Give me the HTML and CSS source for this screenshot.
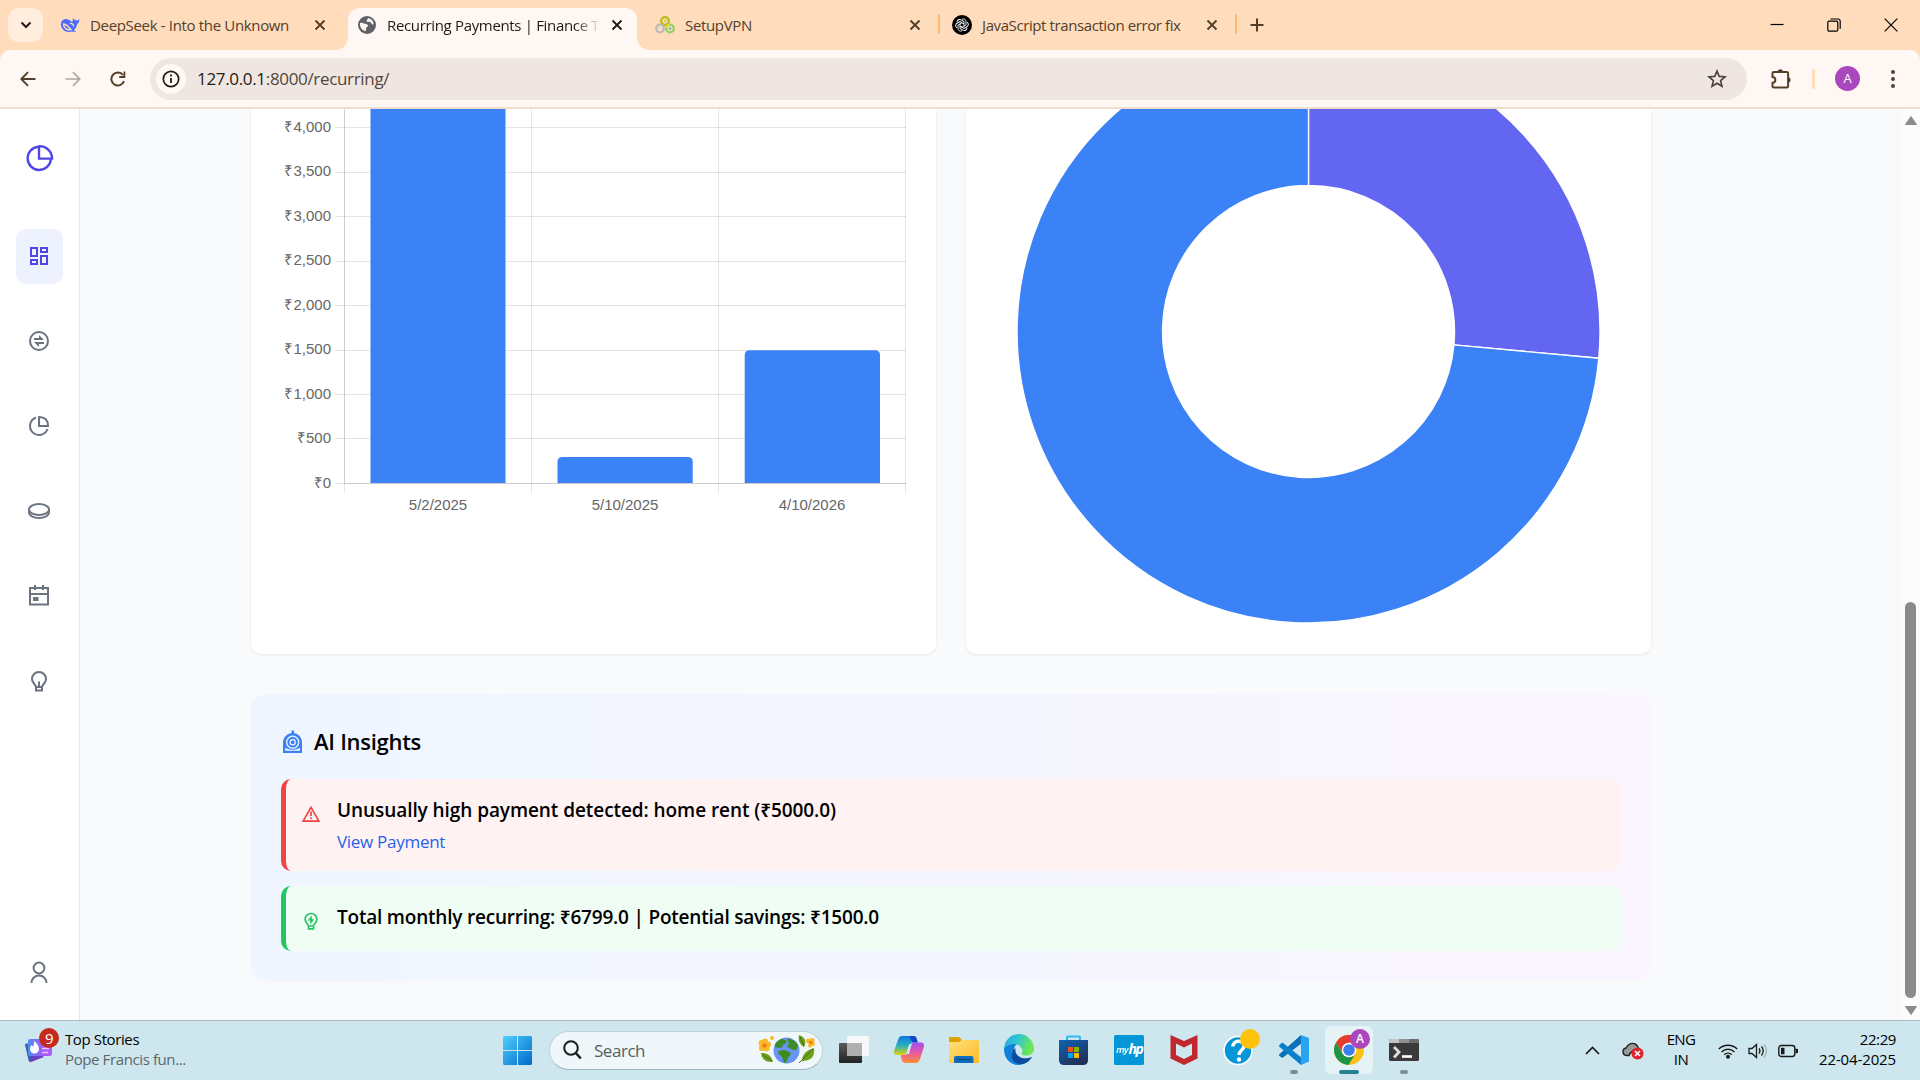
FILE: index.html
```html
<!DOCTYPE html>
<html lang="en">
<head>
<meta charset="utf-8">
<title>Recurring Payments | Finance Tracker</title>
<link rel="stylesheet" href="styles.css">
</head>
<body>
<svg class="defs" width="0" height="0" aria-hidden="true">
  <symbol id="x" viewBox="0 0 12 12"><path d="M1.500 1.500l9 9M10.500 1.500l-9 9" fill="none" stroke="currentColor" stroke-width="1.900"/></symbol>
</svg>

<header class="tabstrip">
  <button class="tab-search"><svg width="12" height="8" viewBox="0 0 12 8"><path d="M1.500 1.500L6 6l4.500-4.500" fill="none" stroke="#1f1a15" stroke-width="2"/></svg></button>
  <div class="tab tab-a">
    <svg class="fav" viewBox="0 0 20 20"><path d="M1 8C2 4 6 3 9 5c1 .5 2 1 3 2 1-.5 1-2 .5-3.500 2 .5 2.500 2 4 2 .8 0 1.500-.4 2.800-1.500C19.300 7 18.500 8.500 17 9c0 3-1.500 4.500-3 6l2 1.500c-1.500.6-3 .3-4.500 0C6 18.500 0 14 1 8z" fill="#4d6bfe"/><path d="M3.500 9c3 0 5 3 7.500 5.500-4 1-7.500-1.500-7.500-5.500zM10 8.500c2-.5 3.500.8 3.500 3" fill="none" stroke="#ffdcbc" stroke-width="1.300"/></svg>
    <span class="tab-title">DeepSeek - Into the Unknown</span>
    <svg class="close"><use href="#x"/></svg>
  </div>
  <div class="tab active">
    <svg class="fav" viewBox="0 0 20 20"><circle cx="10" cy="10" r="9" fill="#5f6368"/><path d="M3 8c3-1 4 1 6 1 1.500 0 2 1 2 2s-2 1-2 2.500V16c-4 0-6.500-4-6-8zM10 3c2 0 0 2-.5 3 .5 1.500 2 .5 3.500 1s1 2.500 3.500 2.500C17 6 14 3 10 3z" fill="#fff5f0"/></svg>
    <span class="tab-title">Recurring Payments | Finance Tr</span>
    <svg class="close"><use href="#x"/></svg>
  </div>
  <div class="tab tab-c">
    <svg class="fav" viewBox="0 0 20 20"><g fill="none" stroke-width="2.300"><circle cx="10" cy="6" r="3.800" stroke="#b5bd1c"/><circle cx="5" cy="13.500" r="3.800" stroke="#bdb9b2"/><circle cx="15" cy="13.500" r="3.800" stroke="#8fd460"/><path d="M11.300 13a3.800 3.800 0 0 1 3.700-3.300" stroke="#e8d52a"/></g><circle cx="10" cy="6" r="1.300" fill="#f3d020"/><circle cx="5" cy="13.500" r="1.300" fill="#ddd"/><circle cx="15" cy="13.500" r="1.300" fill="#58c4a8"/></svg>
    <span class="tab-title">SetupVPN</span>
    <svg class="close"><use href="#x"/></svg>
  </div>
  <i class="sep"></i>
  <div class="tab tab-d">
    <svg class="fav" viewBox="0 0 20 20"><circle cx="10" cy="10" r="10" fill="#000"/><g fill="none" stroke="#fff" stroke-width=".9"><path d="M10 4.200c2-1 4 .4 4 2.400v3.400l-4 2.300-2.200-1.300"/><path d="M10 4.200c2-1 4 .4 4 2.400v3.400l-4 2.300" transform="rotate(60 10 10)"/><path d="M10 4.200c2-1 4 .4 4 2.400v3.400l-4 2.300" transform="rotate(120 10 10)"/><path d="M10 4.200c2-1 4 .4 4 2.400v3.400l-4 2.300" transform="rotate(180 10 10)"/><path d="M10 4.200c2-1 4 .4 4 2.400v3.400l-4 2.300" transform="rotate(240 10 10)"/><path d="M10 4.200c2-1 4 .4 4 2.400v3.400l-4 2.300" transform="rotate(300 10 10)"/></g></svg>
    <span class="tab-title">JavaScript transaction error fix</span>
    <svg class="close"><use href="#x"/></svg>
  </div>
  <i class="sep"></i>
  <svg class="plus" width="14" height="14" viewBox="0 0 14 14"><path d="M7 .5v13M.5 7h13" stroke="#54402a" stroke-width="2"/></svg>
  <div class="winbtns">
    <svg viewBox="0 0 14 14"><path d="M.5 6.500h13" stroke="#000" stroke-width="1.200"/></svg>
    <svg viewBox="0 0 14 14" fill="none" stroke="#000" stroke-width="1.200"><rect x=".8" y="3.200" width="10" height="10" rx="1.500"/><path d="M3.500 1h7.500a2.200 2.200 0 0 1 2.200 2.200v7.500"/></svg>
    <svg viewBox="0 0 14 14"><path d="M.7.700l12.600 12.600M13.300.700L.7 13.300" stroke="#000" stroke-width="1.200"/></svg>
  </div>
</header>

<div class="toolbar-wrap">
<nav class="toolbar">
  <svg class="nav" viewBox="0 0 16 16"><path d="M15.500 8H1.500M8 1.200L1.300 8 8 14.800" fill="none" stroke="#54402a" stroke-width="1.900"/></svg>
  <svg class="nav" viewBox="0 0 16 16"><path d="M.5 8h14M8 1.200L14.700 8 8 14.800" fill="none" stroke="#b1a7a0" stroke-width="1.700"/></svg>
  <svg class="nav" viewBox="0 0 16 16"><path d="M14 10.200A6.500 6.500 0 1 1 13 4" fill="none" stroke="#54402a" stroke-width="2"/><path d="M15.300.500V7H9.200V5h4.300V.5z" fill="#54402a"/></svg>
  <div class="omnibox">
    <span class="info"><svg width="18" height="18" viewBox="0 0 18 18"><circle cx="9" cy="9" r="7.700" fill="none" stroke="#1f1b16" stroke-width="1.700"/><path d="M9 8v5M9 4.600v1.800" stroke="#1f1b16" stroke-width="1.800"/></svg></span>
    <span class="url"><b>127.0.0.1</b>:8000/recurring/</span>
    <svg class="star" width="20" height="20" viewBox="0 0 20 20"><path d="M10 2l2.200 5.400 5.800.4-4.400 3.800 1.400 5.700-5-3.100-5 3.100 1.400-5.700L2 7.800l5.800-.4z" fill="none" stroke="#4a403a" stroke-width="1.600"/></svg>
  </div>
  <svg class="puzzle" width="22" height="22" viewBox="0 0 22 22"><path d="M2.500 5.300q0-1.300 1.300-1.300h13q1.300 0 1.300 1.300v13q0 1.300-1.300 1.300h-13q-1.300 0-1.300-1.300v-3.600a2.800 2.800 0 0 0 0-5.600z" fill="none" stroke="#54402a" stroke-width="2"/><path d="M7.600 4a2.700 2.700 0 0 1 5.400 0zM18 9.200a2.600 2.600 0 0 1 0 5.200z" fill="#54402a"/></svg>
  <i class="sep"></i>
  <span class="avatar">A</span>
  <svg class="dots" width="4" height="18" viewBox="0 0 4 18" fill="#54402a"><circle cx="2" cy="2" r="2"/><circle cx="2" cy="9" r="2"/><circle cx="2" cy="16" r="2"/></svg>
</nav>
</div>

<div class="viewport">
  <aside class="sidebar">
    <svg class="logo" viewBox="0 0 24 24" fill="none" stroke="#4f46e5" stroke-width="1.900"><path d="M11.500 3A9.300 9.300 0 1 0 21.500 13"/><path d="M12 2V12.500H22.500A10 10 0 0 0 12 2.500"/></svg>
    <a class="item on"><svg viewBox="0 0 24 24" fill="none" stroke="currentColor" stroke-width="2"><path d="M4 4h6v8H4zM4 16h6v4H4zM14 4h6v4h-6zM14 12h6v8h-6z"/></svg></a>
    <a class="item"><svg viewBox="0 0 24 24"><circle cx="12" cy="12" r="9" fill="none" stroke="currentColor" stroke-width="2"/><path d="M12 9V6l5 5H7V9zM12 15v3l-5-5h10v2z" fill="currentColor"/></svg></a>
    <a class="item"><svg viewBox="0 0 24 24" fill="none" stroke="currentColor" stroke-width="2"><path d="M9 3.500A9 9 0 1 0 20.500 15"/><path d="M12 3q9 0 9 9h-9z"/></svg></a>
    <a class="item"><svg viewBox="0 0 24 24" fill="none" stroke="currentColor" stroke-width="1.900"><ellipse cx="12" cy="10.500" rx="10" ry="5.500"/><path d="M2 10.500v3C2 16.500 6.500 19 12 19s10-2.500 10-5.500v-3"/></svg></a>
    <a class="item"><svg viewBox="0 0 24 24"><path d="M3 4h18v16.500H3zM3 10h18M8 1v5M16 1v5" fill="none" stroke="currentColor" stroke-width="2"/><path d="M6 13h5.500v4H6z" fill="currentColor"/></svg></a>
    <a class="item"><svg viewBox="0 0 24 24" fill="none" stroke="currentColor" stroke-width="2"><path d="M9 18c0-2.500-4-3.500-4-8a7 7 0 0 1 14 0c0 4.500-4 5.500-4 8zM9 18v3.500h6V18M12 12.500V18"/></svg></a>
    <a class="item user"><svg viewBox="0 0 24 24" fill="none" stroke="currentColor" stroke-width="2"><circle cx="12" cy="7" r="5.400"/><path d="M4.500 22a7.500 7.500 0 0 1 15 0"/></svg></a>
  </aside>

  <main class="content">
    <section class="charts">
      <div class="card">
        <svg viewBox="251 109 685 545" width="685" height="545">
          <g stroke="#000" stroke-opacity=".1">
            <path d="M335 127.500H906M335 172.500H906M335 216.500H906M335 261.500H906M335 305.500H906M335 350.500H906M335 394.500H906M335 438.500H906M335 483.500H906" fill="none"/>
            <path d="M344.500 109V493M531.500 109V493M718.500 109V493M905.500 109V493M344.500 109V483M344 483.500H906" fill="none"/>
          </g>
          <g fill="#3b82f6">
            <path d="M370.500 109H505.500V483H370.500z"/>
            <path d="M557.500 483V462q0-5 5-5H687.700q5 0 5 5V483z"/>
            <path d="M744.700 483V355.300q0-5 5-5H875q5 0 5 5V483z"/>
          </g>
          <g class="ylab">
            <text x="331" y="132">₹4,000</text><text x="331" y="176">₹3,500</text><text x="331" y="221">₹3,000</text><text x="331" y="265">₹2,500</text><text x="331" y="310">₹2,000</text><text x="331" y="354">₹1,500</text><text x="331" y="399">₹1,000</text><text x="331" y="443">₹500</text><text x="331" y="488">₹0</text>
          </g>
          <g class="xlab"><text x="438" y="510">5/2/2025</text><text x="625" y="510">5/10/2025</text><text x="812" y="510">4/10/2026</text></g>
        </svg>
      </div>
      <div class="card">
        <svg viewBox="966 109 685 545" width="685" height="545" stroke="#fff" stroke-width="1.400">
          <path d="M1308.500 40A291.500 291.500 0 0 1 1598.800 358.200L1453.900 344.900A146 146 0 0 0 1308.500 185.500z" fill="#6366f1"/>
          <path d="M1598.800 358.200A291.500 291.500 0 1 1 1308.500 40V185.500A146 146 0 1 0 1453.900 344.900z" fill="#3b82f6"/>
        </svg>
      </div>
    </section>

    <section class="insights">
      <h2><svg width="22" height="24" viewBox="0 0 22 24"><path d="M1 23V12a9.500 9.500 0 0 1 8.500-9V.5h2.500V3a9.500 9.500 0 0 1 8 9v11z" fill="#3b82f6"/><circle cx="10.700" cy="12.200" r="6" fill="none" stroke="#eff5ff" stroke-width="1.300"/><circle cx="10.700" cy="12.200" r="2.600" fill="none" stroke="#eff5ff" stroke-width="1.200"/><path d="M3.200 17.800V20.800h14.800v-3q-3 2-7.400 2t-7.400-2z" fill="#eff5ff"/></svg><span>AI Insights</span></h2>
      <div class="alert red">
        <svg viewBox="0 0 24 24"><path d="M12 4L21.500 20.500h-19z" fill="none" stroke="#ef4444" stroke-width="2"/><path d="M12 9v5.500M12 16v2" stroke="#ef4444" stroke-width="2"/></svg>
        <div><p>Unusually high payment detected: home rent (₹5000.0)</p><a>View Payment</a></div>
      </div>
      <div class="alert green">
        <svg viewBox="0 0 24 24"><path d="M9 18c0-2.500-4-3.500-4-8a7 7 0 0 1 14 0c0 4.500-4 5.500-4 8zM9 18v3.500h6V18" fill="none" stroke="#22c55e" stroke-width="2"/><path d="M13 5.500V10h3l-5 6v-4.500H8z" fill="#22c55e"/></svg>
        <div><p>Total monthly recurring: ₹6799.0 | Potential savings: ₹1500.0</p></div>
      </div>
    </section>
  </main>

  <div class="scrollbar">
    <svg width="14" height="11" viewBox="0 0 14 11"><path d="M7 1.500L12.500 9.500h-11z" fill="#8b8b8b" stroke="#8b8b8b" stroke-linejoin="round"/></svg>
    <i></i>
    <svg width="14" height="11" viewBox="0 0 14 11"><path d="M7 9.500L12.500 1.500h-11z" fill="#8b8b8b" stroke="#8b8b8b" stroke-linejoin="round"/></svg>
  </div>
</div>

<footer class="taskbar">
  <div class="news">
    <svg width="36" height="38" viewBox="0 0 36 38"><defs><linearGradient id="nw" x1="0" x2="1"><stop offset="0" stop-color="#4f8df5"/><stop offset=".6" stop-color="#a05cf8"/><stop offset="1" stop-color="#b45cff"/></linearGradient></defs><path d="M0 16l4 17q.5 1.500 2 1L19 29z" fill="#6a3fc0"/><path d="M0 16l3-.8 3 16-2.500 1z" fill="#2d6fae"/><rect x="3" y="11" width="24" height="17" rx="2" fill="url(#nw)"/><path d="M9 13c3 2 5 5 5 8a4.500 4.500 0 0 1-9 0c0-2 1-3 1.500-4l1.500 1.500C9 17 9 15 9 13z" fill="#fff"/><path d="M17 20.500h7M17 24.500h6" stroke="#e3c8ff" stroke-width="1.500"/><circle cx="24" cy="10" r="10" fill="#c42b1c"/><text x="24" y="15.500" class="nine">9</text></svg>
    <div><p>Top Stories</p><p class="sub">Pope Francis fun...</p></div>
  </div>
  <div class="apps">
    <svg class="win" width="29" height="29" viewBox="0 0 29 29"><defs><linearGradient id="wn" x2="1" y2="1"><stop offset="0" stop-color="#4fd0ff"/><stop offset="1" stop-color="#0068c8"/></linearGradient></defs><path d="M1 0h13v14H0V1zM15 0h13l1 1v13H15zM0 15h14v14H1l-1-1zM15 15h14v13l-1 1H15z" fill="url(#wn)"/></svg>
    <div class="search">
      <svg width="19" height="20" viewBox="0 0 19 20"><circle cx="8" cy="8" r="6.800" fill="none" stroke="#1d1d1d" stroke-width="2"/><path d="M12.800 13l5 5.500" stroke="#1d1d1d" stroke-width="2.600"/></svg>
      <span>Search</span>
      <svg class="art" width="57" height="30" viewBox="0 0 57 30">
        <g fill="#fbb829"><circle cx="3.500" cy="8" r="3"/><circle cx="7" cy="6.500" r="3"/><circle cx="10" cy="9.500" r="3"/><circle cx="8.500" cy="13.500" r="3"/><circle cx="4" cy="13" r="3"/><circle cx="14" cy="3" r="2"/><circle cx="50.500" cy="6" r="2.500"/><circle cx="54" cy="5.500" r="2.500"/><circle cx="55" cy="9" r="2"/><circle cx="52" cy="10.500" r="2"/></g><circle cx="6.500" cy="10.500" r="2.200" fill="#f07818"/><circle cx="52.700" cy="7.500" r="1.700" fill="#f07818"/>
        <path d="M3 18c5 0 10 1 12 9-7 0-11-2-12-9zM41 0c6 2 8 6 5 12-5-3-6-7-5-12zM56 13c1 9-3 13-12 13 0-6 4-11 12-13z" fill="#6fa01c"/><path d="M5 20l9 6M42 2l4 9M55 14L41 28" stroke="#41700f" fill="none"/>
        <circle cx="28.500" cy="15.500" r="13" fill="#6a94f4"/><path d="M17 9c2-3 5-5 8-5l4 2-2 3-3 1 1 2-4 1-4-1zM20 17c2-2 6-3 9-1l4 2c0 2-2 3-3 5-1 3-2 5-4 5-1-2-1-4-2-6s-4-2-4-5zM29 3.500c5 0 9 3 11 7l-2 5-4-1-5-3 2-3z" fill="#3c8c20"/>
      </svg>
    </div>
    <svg class="app" viewBox="0 0 30 30"><defs><linearGradient id="tv" x2="0" y2="1"><stop offset="0" stop-color="#5a5a5a"/><stop offset="1" stop-color="#222"/></linearGradient></defs><rect y="8" width="23" height="20" rx="1" fill="url(#tv)"/><rect x="8" y="1" width="22" height="20" rx="1" fill="#fafafa" fill-opacity=".92"/><path d="M8 8h15v13H8z" fill="#a8a8a8" fill-opacity=".9"/></svg>
    <svg class="app" viewBox="0 0 30 30"><defs><linearGradient id="c1" x2="0" y2="1"><stop offset="0" stop-color="#0f78e0"/><stop offset=".5" stop-color="#26b0c0"/><stop offset="1" stop-color="#e8d000"/></linearGradient><linearGradient id="c2" x2="0" y2="1"><stop offset="0" stop-color="#a050f0"/><stop offset=".5" stop-color="#e858a0"/><stop offset="1" stop-color="#ff9038"/></linearGradient></defs><path d="M8 1h12q2 0 3 4l.8 2.500h-4q-3 0-4 3L13 17q-1 3-4 3H3q-3.500 0-3-4L4 5q1-4 4-4z" fill="url(#c1)"/><path d="M15 1h5q2 0 3 4l.8 2.500h-4q-2 0-3-3z" fill="#1844c8"/><path d="M22 28H11q-2.500 0-3.500-4L7 20h3q3 0 4-3l2.500-7q1-2.500 4-2.500H27q3.500 0 3 4L26 24q-1 4-4 4z" fill="url(#c2)"/><path d="M13 16l2.300-7h2.500L15 19h-3z" fill="#cee7ee"/></svg>
    <svg class="app" viewBox="0 0 30 30"><defs><linearGradient id="fd" x2="1" y2="1"><stop offset="0" stop-color="#ffe07a"/><stop offset="1" stop-color="#fcba28"/></linearGradient></defs><path d="M0 3q0-1 1-1h9l3 3v5H0z" fill="#e0a100"/><path d="M0 7h10l3-2h16q1 0 1 1v22H0z" fill="url(#fd)"/><path d="M5 28v-5q0-2 2-2h15q2.500 0 2.500 2v5z" fill="#0f6cbd"/><path d="M8 24.500h13" stroke="#08467e" stroke-width="1.200"/></svg>
    <svg class="app" viewBox="0 0 30 30"><defs><linearGradient id="e1" x2="1" y2=".3"><stop offset="0" stop-color="#26a8dc"/><stop offset=".5" stop-color="#30c8d0"/><stop offset="1" stop-color="#6de850"/></linearGradient></defs><circle cx="15" cy="15" r="15" fill="#cee7ee"/><path d="M0 13C3 8 9 7 13 9c-4 3-4 9 0 13 4 3 10 2 15 0-4 6-9 8-14 8C6 30-.5 23 0 13z" fill="#1180dc"/><path d="M11.500 13c-1.500 8 7 13 16.500 9-4 7-13 9.500-18 4.500-3-3.500-3-10 1.500-13.500z" fill="#0d4c9c"/><path d="M0 14A15 15 0 0 1 30 14c0 4-3.500 6.500-7.500 6.500s-5.500-1.500-4.500-3 .5-3-.5-4.500C14 8 5 7 0 14z" fill="url(#e1)"/></svg>
    <svg class="app" viewBox="0 0 30 30"><defs><linearGradient id="st" x2=".6" y2="1"><stop offset="0" stop-color="#0f64b4"/><stop offset="1" stop-color="#223058"/></linearGradient></defs><path d="M8 8V2.500q0-1 1-1h11q1 0 1 1V8" fill="none" stroke="#30b8f0" stroke-width="2"/><path d="M0 5h29v20q0 5-5 5H5q-5 0-5-5z" fill="url(#st)"/><path d="M9 12h5v5H9z" fill="#f25022"/><path d="M15 12h5v5h-5z" fill="#7fba00"/><path d="M9 18h5v5H9z" fill="#00a4ef"/><path d="M15 18h5v5h-5z" fill="#ffb900"/></svg>
    <svg class="app" viewBox="0 0 30 30"><rect width="30" height="30" rx="1.500" fill="#0496d6"/><text x="2" y="18" class="my">my</text><text x="14.500" y="18.500" class="hp">hp</text></svg>
    <svg class="app" viewBox="0 0 30 30"><path d="M1.500 0L15 6 28.500 0v23.500L15 30 1.500 23.500zM7 8.500V20l8 4 8-4V8.500L15 12.500z" fill="#c0282d" fill-rule="evenodd"/></svg>
    <svg class="app" viewBox="0 0 30 30"><circle cx="14" cy="15.500" r="14" fill="#0496d6" stroke="#fff" stroke-width="1.600"/><path d="M9 11.500c0-7 11-7 11-.5 0 4-5 4-5 9" fill="none" stroke="#fff" stroke-width="3.400"/><circle cx="15" cy="24.500" r="2.200" fill="#fff"/><circle cx="26" cy="4" r="10" fill="#fec20c"/></svg>
    <svg class="app" viewBox="0 0 30 30"><path d="M0 19.500L22 0l1 8L4 22.500q-1 .5-1.800-.3L0 20.500z" fill="#0b70b8"/><path d="M0 10.500L2.500 8q.8-.6 1.600 0L23 23l-1 7L0 11.500z" fill="#0a80cc"/><path d="M22 0l8 3v23.500L22 30z" fill="#28a4f0"/><rect x="11" y="35" width="8" height="4" rx="2" fill="#7f9094"/></svg>
    <div class="chrome">
      <svg width="30" height="30" viewBox="0 0 30 30"><circle cx="15" cy="15" r="15" fill="#fbc116"/><path d="M2 7.500A15 15 0 0 1 28 7.500H15L8.500 18.500z" fill="#e33b2e"/><path d="M2 7.500A15 15 0 0 0 14.500 30L21.500 18.500 8.500 18.800z" fill="#1e9447"/><circle cx="15" cy="15" r="7.300" fill="#fff"/><circle cx="15" cy="15" r="5.800" fill="#3a7df0"/></svg>
      <span>A</span>
    </div>
    <svg class="app" viewBox="0 0 30 30"><rect y="4" width="30" height="22" rx="1.500" fill="#3a3a3a"/><path d="M0 8V5.500Q0 4 1.500 4H10v4z" fill="#c4c4c4"/><path d="M10 4h10v4H10z" fill="#909090"/><path d="M20 4h8.500Q30 4 30 5.500V8H20z" fill="#6c6c6c"/><path d="M5 12l5 5-5 5.500" fill="none" stroke="#ddd" stroke-width="2.800"/><path d="M13 21.500h10" stroke="#fff" stroke-width="2.600"/><rect x="11" y="35" width="8" height="4" rx="2" fill="#7f9094"/></svg>
  </div>
  <div class="tray">
    <svg width="15" height="9" viewBox="0 0 15 9"><path d="M1 8l6.500-6.500L14 8" fill="none" stroke="#1a1a1a" stroke-width="1.700"/></svg>
    <svg class="cloud" width="22" height="18" viewBox="0 0 22 18"><path d="M4.500 13.500a3.800 3.800 0 0 1-.5-7.500C6 2 10 .5 13 2s3.500 3 4 5c-4 0-9 3-10 6.500z" fill="#9a9a9a" stroke="#222" stroke-width="1.400"/><circle cx="15.500" cy="11.500" r="6" fill="#e0202c"/><path d="M13 9l5 5m0-5l-5 5" stroke="#fff" stroke-width="1.500"/></svg>
    <div class="lang"><p>ENG</p><p>IN</p></div>
    <svg class="wifi" width="20" height="16" viewBox="0 0 20 16" fill="none" stroke="#1a1a1a" stroke-width="1.400"><path d="M.8 6a13 13 0 0 1 18.400 0M3.600 8.900a9 9 0 0 1 12.800 0M6.200 11.700a5.400 5.400 0 0 1 7.600 0"/><circle cx="10" cy="13.800" r="1.300" fill="#1a1a1a"/></svg>
    <svg class="vol" width="20" height="16" viewBox="0 0 20 16" fill="none" stroke="#1a1a1a" stroke-width="1.300"><path d="M1 5.500h3l4.500-4v13l-4.500-4H1z"/><path d="M11 5.500q2 2.500 0 5M13.500 3.500q3.500 4.500 0 9"/><path d="M16 1.500q5 6.500 0 13" stroke="#9fb3b9"/></svg>
    <svg class="bat" width="20" height="14" viewBox="0 0 20 14"><rect x=".8" y="1.500" width="16" height="11" rx="2.500" fill="none" stroke="#1a1a1a" stroke-width="1.400"/><path d="M3 3.700h3.500v6.600H3zM17.500 4.800H19q1 0 1 1v2.400q0 1-1 1h-1.500z" fill="#1a1a1a"/></svg>
    <div class="clock"><p>22:29</p><p class="date">22-04-2025</p></div>
  </div>
</footer>
</body>
</html>
```
FILE: styles.css
```css
* { box-sizing: border-box; margin: 0; padding: 0; }
body { width: 1920px; height: 1080px; overflow: hidden; display: flex; flex-direction: column; font-family: "Open Sans", "Noto Sans", sans-serif; color: #000; background: #f9fafb; }
svg { display: block; flex: none; }
.defs { position: absolute; }

.tabstrip { height: 50px; background: #ffdcbc; display: flex; align-items: center; padding-left: 8px; }
.tab-search { width: 35px; height: 34px; border: 0; border-radius: 11px; background: #ffeddd; display: flex; align-items: center; justify-content: center; }
.tab { display: flex; align-items: center; height: 42px; margin-top: 8px; padding-bottom: 8px; }
.fav { width: 20px; height: 20px; margin-right: 10px; }
.tab-title { flex: 1; font-size: 15px; line-height: 22px; letter-spacing: -.336px; white-space: nowrap; color: #54402a; }
.close { width: 12px; height: 12px; color: #54402a; }
.tab-a { width: 266px; margin-left: 17px; }
.active { width: 289px; margin-left: 22px; padding: 0 14px 8px 9px; background: #fff7f3; border-radius: 12px 12px 0 0; position: relative; }
.active::before, .active::after { content: ""; position: absolute; bottom: 0; width: 12px; height: 12px; }
.active::before { left: -12px; background: radial-gradient(circle at 0 0, transparent 11.500px, #fff7f3 12px); }
.active::after { right: -12px; background: radial-gradient(circle at 100% 0, transparent 11.500px, #fff7f3 12px); }
.active .tab-title { color: #1f1a15; -webkit-mask-image: linear-gradient(90deg, #000 84%, transparent 95%); mask-image: linear-gradient(90deg, #000 84%, transparent 95%); }
.active .close { color: #1f1a15; }
.tab-c { width: 266px; margin-left: 18px; }
.tab-d { width: 266px; margin-left: 12px; }
.tab-d .tab-title { letter-spacing: -.4px; }
.sep { width: 2px; height: 20px; border-radius: 1px; background: #ffb969; }
.tabstrip > .sep { margin-left: 17px; margin-top: -2px; }
.plus { margin-left: 13px; }
.winbtns { margin: 0 22px 0 auto; display: flex; gap: 43px; }
.winbtns svg { width: 14px; height: 14px; }

.toolbar-wrap { background: #ffdcbc; }
.toolbar { height: 59px; background: #fff7f3; border-bottom: 2px solid #f0dfcf; display: flex; align-items: center; padding-left: 20px; border-radius: 10px 10px 0 0; }
.nav { width: 16px; height: 16px; margin-right: 29px; }
.omnibox { width: 1597px; height: 42px; margin-left: -5px; border-radius: 21px; background: #efe6e2; display: flex; align-items: center; padding: 0 20px 0 6px; }
.info { width: 30px; height: 30px; border-radius: 50%; background: #fff7f3; display: flex; align-items: center; justify-content: center; margin-right: 11px; }
.url { font-size: 17px; line-height: 24px; letter-spacing: -.33px; color: #54463c; }
.url b { font-weight: 400; color: #1f1b16; }
.star { margin-left: auto; }
.puzzle { margin-left: 23px; }
.toolbar .sep { margin-left: 20px; background: #ffdcbc; width: 3px; }
.avatar { width: 25px; height: 25px; border-radius: 50%; background: #ab47bc; color: #fff; font-size: 13px; line-height: 25px; text-align: center; margin-left: 20px; }
.dots { margin-left: 31px; }

.viewport { height: 911px; display: flex; background: #f9fafb; }
.sidebar { width: 80px; background: #fff; border-right: 1px solid #e5e7eb; display: flex; flex-direction: column; align-items: center; padding: 34px 1px 20px 0; }
.logo { width: 30px; height: 30px; margin-bottom: 56px; }
.item { width: 47px; height: 55px; margin-bottom: 30px; border-radius: 10px; color: #6b7280; display: flex; align-items: center; justify-content: center; }
.item svg { width: 24px; height: 24px; margin-bottom: 1px; }
.on { background: #eef2ff; color: #4f46e5; }
.user { margin: auto 0 0; }
.user svg { margin: 1px 0 0; }
.content { width: 1400px; margin-left: 171px; }
.charts { display: flex; gap: 30px; }
.card { width: 685px; height: 545px; background: #fff; border-radius: 0 0 10px 10px; box-shadow: 0 1px 3px rgba(0,0,0,.08); overflow: hidden; }
.ylab, .xlab { font: 15px "Liberation Sans", Arial, sans-serif; fill: #666; text-anchor: end; }
.xlab { text-anchor: middle; }
.insights { margin-top: 40px; height: 287px; padding: 30px; border-radius: 15px; background: linear-gradient(90deg, #eff6ff, #faf5ff); }
.insights h2 { display: flex; align-items: center; gap: 10px; height: 34px; font-size: 22px; font-weight: 600; letter-spacing: -.28px; margin: 0 0 21px 1px; }
.insights h2 svg { margin-top: 1px; }
.alert { display: flex; border-left: 5px solid; border-radius: 10px; padding: 14px 15px; }
.alert svg { width: 20px; height: 20px; margin: 11px 16px 0 0; }
.alert p { font-size: 19px; font-weight: 600; line-height: 34px; letter-spacing: -.071px; white-space: nowrap; }
.green p { letter-spacing: -.208px; }
.alert a { display: block; font-size: 17px; line-height: 30px; letter-spacing: -.29px; color: #2563eb; width: max-content; }
.red { background: #fef2f2; border-color: #ef4444; height: 92px; margin-bottom: 15px; }
.green { background: #f0fdf4; border-color: #22c55e; height: 65px; }
.scrollbar { width: 19px; margin-left: auto; background: #fcfcfc; display: flex; flex-direction: column; align-items: center; padding: 6px 0 4px; }
.scrollbar i { width: 11px; height: 396px; border-radius: 6px; background: #8b8b8b; margin: auto 0 7px; }

.taskbar { height: 60px; border-top: 1px solid #a9b9bf; background: #cee7ee; display: flex; align-items: center; }
.news { width: 503px; padding-left: 25px; display: flex; gap: 4px; align-items: center; font-size: 15px; line-height: 20px; letter-spacing: -.39px; }
.news svg { margin-top: -7px; }
.news div { margin-top: -4px; }
.nine { font-size: 15px; fill: #fff; text-anchor: middle; }
.sub { color: #5a666b; }
.apps { display: flex; align-items: center; margin-top: -1px; }
.search { width: 274px; height: 39px; border-radius: 20px; margin: 0 16px 0 17px; background: #eff7fa; border: 1px solid #bfd3da; border-bottom-color: #9fb4bb; display: flex; align-items: center; padding: 0 7px 0 13px; }
.search span { font-size: 17px; letter-spacing: -.47px; margin-left: 12px; color: #555f63; }
.art { margin-left: auto; }
.app { width: 30px; height: 30px; margin-right: 25px; overflow: visible; }
.my { font: italic 600 9.500px "Open Sans", sans-serif; fill: #fff; letter-spacing: -.6px; }
.hp { font: italic 700 14px "Open Sans", sans-serif; fill: #fff; letter-spacing: -1.500px; }
.chrome { width: 48px; height: 48px; margin: 0 16px 0 -9px; border-radius: 6px; background: #e5f3f7; position: relative; display: flex; align-items: center; justify-content: center; }
.chrome span { position: absolute; left: 25px; top: 3px; width: 20px; height: 20px; border-radius: 50%; background: #ab47bc; color: #fff; font: 600 12px/20px "Open Sans", sans-serif; text-align: center; }
.chrome::after { content: ""; position: absolute; left: 14px; bottom: 0; width: 20px; height: 4px; border-radius: 2px; background: #27808f; }
.tray { margin-left: auto; display: flex; align-items: center; padding-right: 24px; font-size: 15px; line-height: 20px; }
.tray div { margin-top: -4px; }
.cloud { margin-left: 22px; }
.lang { width: 34px; margin-left: 20px; text-align: center; letter-spacing: -.6px; }
.wifi { margin-left: 20px; }
.vol { margin-left: 10px; }
.bat { margin-left: 10px; }
.clock { width: 80px; margin-left: 18px; text-align: right; letter-spacing: -.4px; }
.date { letter-spacing: -.13px; }
```
